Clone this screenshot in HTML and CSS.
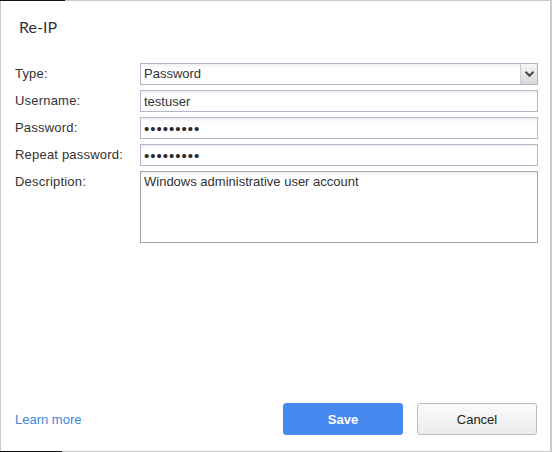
FILE: index.html
```html
<!DOCTYPE html>
<html>
<head>
<meta charset="utf-8">
<link rel="stylesheet" href="styles.css">
</head>
<body>
<div class="dialog">
  <div class="header">Re-IP</div>
  <div class="form">
    <label class="label">Type:</label>
    <div class="select">
      <span class="select-text">Password</span>
      <span class="select-arrow"><svg width="9" height="6" viewBox="0 0 9 6"><path d="M0.5 0.8 L4.5 4.8 L8.5 0.8" fill="none" stroke="#4a4a4a" stroke-width="2"/></svg></span>
    </div>
    <label class="label">Username:</label>
    <input class="field" type="text" value="testuser">
    <label class="label">Password:</label>
    <input class="field pw" type="password" value="123456789">
    <label class="label">Repeat password:</label>
    <input class="field pw" type="password" value="123456789">
    <label class="label label-top">Description:</label>
    <textarea class="area">Windows administrative user account</textarea>
  </div>
  <div class="footer">
    <a class="learn" href="#">Learn more</a>
    <div class="buttons">
      <button class="btn btn-primary">Save</button>
      <button class="btn btn-default">Cancel</button>
    </div>
  </div>
</div>
</body>
</html>
```

FILE: styles.css
```css
html, body {
  margin: 0;
  padding: 0;
}
body {
  width: 552px;
  height: 452px;
  background:
    linear-gradient(#111, #111) 0 0 / 65px 1px no-repeat,
    linear-gradient(#111, #111) 0 100% / 62px 1px no-repeat,
    #cacaca;
  font-family: "Liberation Sans", Arial, sans-serif;
  color: #333;
  overflow: hidden;
}
.dialog {
  box-sizing: border-box;
  margin: 1px 0 0 1px;
  width: 549px;
  height: 450px;
  background: #fff;
  display: flex;
  flex-direction: column;
}
.header {
  font-family: Lato, "Liberation Sans", sans-serif;
  font-size: 16px;
  line-height: 20px;
  color: #333;
  padding: 16px 0 0 18px;
  height: 48px;
  box-sizing: border-box;
}
.form {
  margin-top: 14px;
  padding: 0 12px 0 14px;
  display: grid;
  grid-template-columns: 125px 1fr;
  row-gap: 5px;
  font-size: 13px;
}
.label {
  line-height: 22px;
  color: #333;
  letter-spacing: 0.2px;
}
.label-top {
  line-height: 20px;
  padding-top: 1px;
}
.field, .select, .area {
  box-sizing: border-box;
  border: 1px solid #b4b4ca;
  background: linear-gradient(#efefef, #fff 4px);
  font-family: "Liberation Sans", Arial, sans-serif;
  font-size: 13px;
  color: #333;
  margin: 0;
  outline: none;
}
.field {
  height: 22px;
  padding: 0 3px;
  width: 100%;
}
.pw {
  font-size: 15px;
  letter-spacing: 1px;
  color: #2a2a2a;
}
.select {
  height: 22px;
  display: flex;
  align-items: stretch;
  justify-content: space-between;
  padding-left: 3px;
}
.select-text {
  line-height: 20px;
}
.select-arrow {
  width: 16px;
  border-left: 1px solid #cfcfcf;
  background: linear-gradient(#f6f6f6, #d8d8d8);
  display: flex;
  align-items: center;
  justify-content: center;
}
.area {
  height: 72px;
  resize: none;
  padding: 2px 3px;
  border-color: #a8a8a8;
  line-height: 16px;
  width: 100%;
}
.footer {
  margin-top: auto;
  padding: 0 13px 16px 14px;
  display: flex;
  align-items: center;
  justify-content: space-between;
}
.learn {
  font-size: 13px;
  color: #3f86d8;
  text-decoration: none;
  padding-top: 1px;
}
.buttons {
  display: flex;
  gap: 14px;
}
.btn {
  width: 120px;
  height: 32px;
  box-sizing: border-box;
  border-radius: 3px;
  font-family: "Liberation Sans", Arial, sans-serif;
  font-size: 13px;
  cursor: pointer;
}
.btn-primary {
  background: #468af0;
  border: 1px solid #468af0;
  color: #fff;
  font-weight: bold;
}
.btn-default {
  background: linear-gradient(#fbfbfb, #ececec);
  border: 1px solid #bdbdbd;
  color: #222;
}
```
